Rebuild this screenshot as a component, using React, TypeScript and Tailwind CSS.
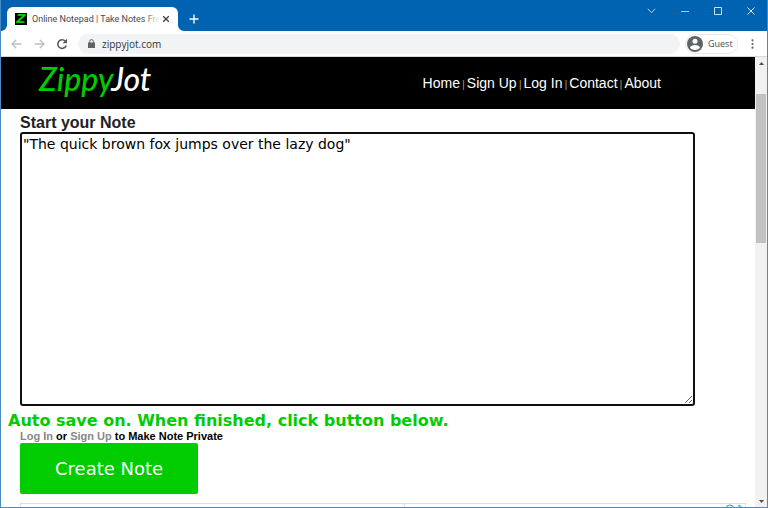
import { ReactNode, useState } from 'react'

const navLinks = ['Home', 'Sign Up', 'Log In', 'Contact', 'About']

const IconButton = ({ label, className = '', children }: { label: string; className?: string; children: ReactNode }) => (
    <button type="button" aria-label={label} className={`flex shrink-0 items-center justify-center ${className}`}>
        {children}
    </button>
)

const TitleBar = () => {
    return (
        <div className="flex h-[31px] shrink-0 items-end bg-[#0063b1]">
            <div className="relative ml-1.5 flex h-6 w-[171px] items-center rounded-t-md bg-white pl-2 pr-1.5">
                <svg className="absolute -left-1.5 bottom-0" width="6" height="6" viewBox="0 0 6 6"><path d="M6 0v6H0a6 6 0 0 0 6-6z" fill="#fff" /></svg>
                <svg className="absolute -right-1.5 bottom-0" width="6" height="6" viewBox="0 0 6 6"><path d="M0 0v6h6a6 6 0 0 1-6-6z" fill="#fff" /></svg>
                <span className="flex h-3 w-3 shrink-0 items-center justify-center bg-black font-['DejaVu_Sans'] text-[13px] leading-4 font-bold italic text-[#00d000]">Z</span>
                <span className="relative ml-[5px] whitespace-nowrap font-['Roboto',sans-serif] text-[9px] leading-4 text-[#45494d]">
                    Online Notepad | Take Notes Fre
                    <span className="absolute inset-y-0 right-0 w-4 bg-linear-to-r from-white/0 to-white" />
                </span>
                <IconButton label="Close tab" className="ml-auto h-3 w-3">
                    <svg width="8" height="8" viewBox="0 0 8 8" stroke="#3c4043" strokeWidth="1.3"><path d="M1.2 1.2l5.6 5.6M6.8 1.2L1.2 6.8" /></svg>
                </IconButton>
            </div>
            <IconButton label="New tab" className="ml-2 h-6 w-4">
                <svg width="10" height="10" viewBox="0 0 10 10" stroke="#fff" strokeWidth="1.4"><path d="M5 .5v9M.5 5h9" /></svg>
            </IconButton>
            <div className="ml-auto flex self-start pt-[3px]">
                <IconButton label="Search tabs" className="h-4 w-[33px]">
                    <svg width="9" height="6" viewBox="0 0 9 6" fill="none" stroke="#bcd5ea"><path d="M.8.8l3.7 3.9L8.2.8" /></svg>
                </IconButton>
                <IconButton label="Minimize" className="h-4 w-[33px]">
                    <svg width="8" height="8" viewBox="0 0 8 8" stroke="#a8c8e2"><path d="M0 4.5h8" /></svg>
                </IconButton>
                <IconButton label="Maximize" className="h-4 w-[33px]">
                    <svg width="8" height="8" viewBox="0 0 8 8" fill="none" stroke="#cfe0ef"><path d="M.5.5h7v7h-7z" /></svg>
                </IconButton>
                <IconButton label="Close" className="h-4 w-[33px]">
                    <svg width="8" height="8" viewBox="0 0 8 8" stroke="#e0ebf5"><path d="M.5.5l7 7M7.5.5l-7 7" /></svg>
                </IconButton>
            </div>
        </div>
    )
}

const Toolbar = () => {
    const [url, setUrl] = useState('zippyjot.com')

    return (
        <div className="flex h-[26px] shrink-0 items-center border-b border-[#d5d7da] bg-white pl-[7px] pr-[7px]">
            <IconButton label="Back" className="h-5 w-4">
                <svg width="11" height="10" viewBox="0 0 11 10" fill="none" stroke="#bcbec1" strokeWidth="1.3"><path d="M10.5 5H1.2M5.3.7L1 5l4.3 4.3" /></svg>
            </IconButton>
            <IconButton label="Forward" className="ml-[7px] h-5 w-4">
                <svg width="11" height="10" viewBox="0 0 11 10" fill="none" stroke="#bcbec1" strokeWidth="1.3"><path d="M.5 5h9.3M5.7.7L10 5 5.7 9.3" /></svg>
            </IconButton>
            <IconButton label="Reload" className="ml-[7px] h-5 w-4">
                <svg width="12" height="12" viewBox="0 0 12 12" fill="none" stroke="#55595d" strokeWidth="1.5"><path d="M10.2 7.4A4.3 4.3 0 1 1 9.2 3.1" /><path d="M11 .8v4.4H6.6z" fill="#55595d" stroke="none" /></svg>
            </IconButton>
            <div className="ml-2 flex h-5 min-w-0 flex-1 items-center rounded-full bg-[#f1f3f4] pl-2.5">
                <svg width="7" height="9" viewBox="0 0 7 9" className="shrink-0"><path d="M0 3.5h7V9H0z" fill="#5f6368" /><path d="M1.7 4V2.4a1.8 1.8 0 0 1 3.6 0V4" fill="none" stroke="#5f6368" /></svg>
                <input aria-label="Address" value={url} onChange={(e) => setUrl(e.target.value)} className="ml-[7px] min-w-0 flex-1 bg-transparent text-[10px] leading-4 text-[#303337] outline-none" />
            </div>
            <button type="button" className="ml-[5px] flex h-5 w-[53px] shrink-0 items-center rounded-full border border-[#e8eaed] pl-px text-[9px] text-[#45494d]">
                <svg width="16" height="16" viewBox="0 0 16 16" className="mr-[5px] shrink-0"><circle cx="8" cy="8" r="8" fill="#5f6368" /><circle cx="8" cy="5.3" r="2.5" fill="#fff" /><path d="M3 11.7c.6-3.5 9.4-3.5 10 0-2.5 3-7.5 3-10 0z" fill="#fff" /></svg>
                Guest
            </button>
            <IconButton label="Menu" className="ml-1.5 h-5 w-4">
                <svg width="3" height="10" viewBox="0 0 3 10" fill="#5f6368"><circle cx="1.5" cy="1.3" r="1.1" /><circle cx="1.5" cy="5" r="1.1" /><circle cx="1.5" cy="8.7" r="1.1" /></svg>
            </IconButton>
        </div>
    )
}

const SiteHeader = () => {
    return (
        <header className="flex h-[52px] items-center justify-between bg-black pl-[38px] pr-[94px]">
            <a href="#" className="self-start font-['Lato',sans-serif] text-[32px] leading-[44px] font-medium italic text-white">
                <span className="text-[#00cc00]">Zippy</span>Jot
            </a>
            <nav className="flex items-baseline gap-0.5 text-sm leading-5 text-white">
                {navLinks.map((link, i) => (
                    <span key={link} className="flex items-baseline gap-0.5">
                        {i > 0 && <span className="text-[11px] text-[#a89858]">|</span>}
                        <a href="#">{link}</a>
                    </span>
                ))}
            </nav>
        </header>
    )
}

const NoteForm = () => {
    const [note, setNote] = useState('"The quick brown fox jumps over the lazy dog"')

    return (
        <form className="pl-[19px] pr-[9px]" onSubmit={(e) => e.preventDefault()}>
            <label htmlFor="note" className="block pt-1 text-base leading-[19px] font-bold text-[#222]">Start your Note</label>
            <textarea
                id="note"
                value={note}
                onChange={(e) => setNote(e.target.value)}
                className="block h-[274px] w-[93%] rounded-[3px] border-2 border-[#101010] bg-white px-px font-['DejaVu_Sans',sans-serif] text-sm leading-5 text-black outline-none"
            />
            <p className="-ml-3 pt-[5px] font-['DejaVu_Sans',sans-serif] text-base leading-[19px] font-bold text-[#00cc00]">Auto save on. When finished, click button below.</p>
            <p className="text-[11px] leading-3 font-bold text-black">
                <a href="#" className="text-[#888]">Log In</a> or <a href="#" className="text-[#888]">Sign Up</a> to Make Note Private
            </p>
            <button type="submit" className="mt-px block h-[51px] rounded-[2px] bg-[#00cc00] px-[35px] font-['DejaVu_Sans',sans-serif] text-lg text-white">Create Note</button>
            <div className="relative mt-[9px] flex h-24 border border-[#dcdfe0]">
                <div className="w-[53%] border-r border-[#dcdfe0]" />
                <svg className="absolute right-0 top-0 bg-white" width="19" height="12" viewBox="0 0 19 12" fill="none" stroke="#00aecd"><circle cx="4" cy="5" r="4" /><path d="M4 3v4M13 1l5 4-5 4z" /></svg>
            </div>
        </form>
    )
}

const Scrollbar = () => {
    return (
        <div className="flex w-3 shrink-0 flex-col items-center bg-[#f1f1f1] pt-[5px] pb-1">
            <svg width="5" height="3" viewBox="0 0 5 3" fill="#505050"><path d="M0 3L2.5 0 5 3z" /></svg>
            <div className="mt-[29px] h-[149px] w-2.5 bg-[#c1c1c1]" />
            <svg className="mt-auto" width="5" height="3" viewBox="0 0 5 3" fill="#505050"><path d="M0 0l2.5 3L5 0z" /></svg>
        </div>
    )
}

const App = () => {
    return (
        <div className="flex h-screen flex-col overflow-hidden border border-t-0 border-[#4a8bc5] bg-white font-['Liberation_Sans',sans-serif]">
            <div className="shrink-0 font-['Open_Sans',sans-serif]">
                <TitleBar />
                <Toolbar />
            </div>
            <div className="flex min-h-0 flex-1">
                <main className="min-w-0 flex-1 overflow-hidden">
                    <SiteHeader />
                    <NoteForm />
                </main>
                <Scrollbar />
            </div>
        </div>
    )
}

export default App
